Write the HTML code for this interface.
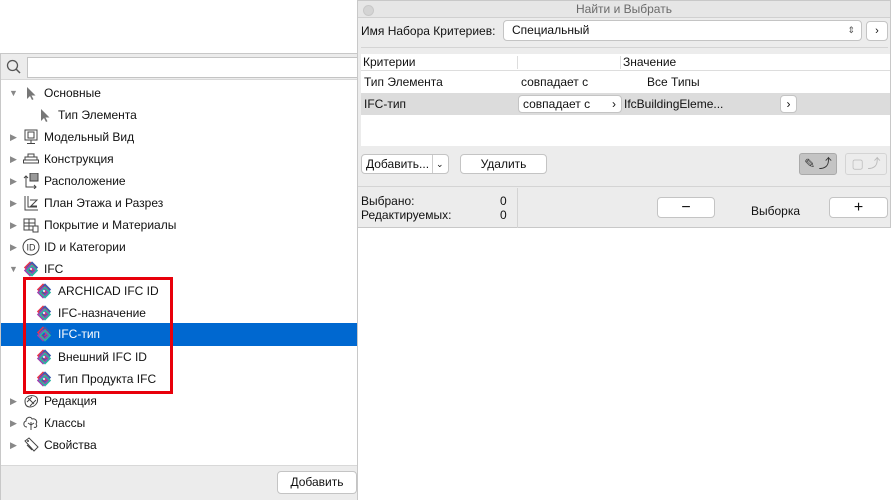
<!DOCTYPE html>
<html><head><meta charset="utf-8"><style>
*{box-sizing:border-box;margin:0;padding:0}
body{width:892px;height:500px;background:#fff;font-family:"Liberation Sans",sans-serif;font-size:12px;color:#111;position:relative;overflow:hidden}
.abs{position:absolute}
#left{left:0;top:53px;width:358px;height:447px;border:1px solid #c8c8c8;background:#fff}
.row{position:absolute;left:0;width:356px;height:22px;line-height:22px;white-space:nowrap}
.tri{position:absolute;top:0;font-size:9px;color:#888}
.ic{position:absolute;top:3px;width:16px;height:16px}
.lbl{position:absolute;top:0}
#right{left:357px;top:0;width:534px;height:228px;background:#ececec;border:1px solid #c8c8c8}
.btn{position:absolute;background:#fff;border:1px solid #c4c4c4;border-radius:4px;text-align:center;font-size:12px}
</style></head><body>
<svg width="0" height="0" style="position:absolute"><defs>
<g id="ifc" fill="none" stroke-width="1.6">
<path d="M7 1.5 L12 6.5 L7 11.5 L2 6.5 Z" stroke="#e8344e"/>
<path d="M9 1.5 L14 6.5 L9 11.5 L4 6.5 Z" stroke="#3b5bb0"/>
<path d="M7 4.5 L12 9.5 L7 14.5 L2 9.5 Z" stroke="#a040b0"/>
<path d="M9 4.5 L14 9.5 L9 14.5 L4 9.5 Z" stroke="#2bb3a0"/>
</g>
<path id="arr" d="M4 2 L4 14 L7 11 L9 15 L10.5 14.3 L8.5 10.5 L12.5 10.5 Z" fill="#777"/>
</defs></svg>

<div id="left" class="abs">
 <div class="abs" style="left:0;top:0;width:356px;height:26px;background:#ececec;border-bottom:1px solid #d8d8d8"></div>
 <svg class="abs" style="left:5px;top:5px" width="16" height="16"><circle cx="6.5" cy="6.5" r="5" fill="none" stroke="#555" stroke-width="1.3"/><line x1="10" y1="10" x2="14" y2="14" stroke="#555" stroke-width="1.5"/></svg>
 <div class="abs" style="left:26px;top:3px;width:331px;height:21px;background:#fff;border:1px solid #c4c4c4"></div>

 <div class="row" style="top:28px"><span class="tri" style="left:8px">▼</span><svg class="ic" style="left:22px" viewBox="0 0 16 16"><use href="#arr"/></svg><span class="lbl" style="left:43px">Основные</span></div>
 <div class="row" style="top:50px"><svg class="ic" style="left:36px" viewBox="0 0 16 16"><use href="#arr"/></svg><span class="lbl" style="left:57px">Тип Элемента</span></div>
 <div class="row" style="top:72px"><span class="tri" style="left:9px">▶</span><svg class="ic" style="left:22px" viewBox="0 0 16 16"><rect x="2" y="1" width="12" height="10" fill="none" stroke="#444"/><rect x="5" y="3" width="6" height="6" fill="none" stroke="#444"/><line x1="8" y1="11" x2="8" y2="14" stroke="#444"/><line x1="4" y1="14.5" x2="12" y2="14.5" stroke="#444"/></svg><span class="lbl" style="left:43px">Модельный Вид</span></div>
 <div class="row" style="top:94px"><span class="tri" style="left:9px">▶</span><svg class="ic" style="left:22px" viewBox="0 0 16 16"><g fill="none" stroke="#444"><rect x="5" y="3" width="6" height="3"/><rect x="2" y="6" width="12" height="3"/><rect x="0.5" y="9" width="15" height="3"/></g></svg><span class="lbl" style="left:43px">Конструкция</span></div>
 <div class="row" style="top:116px"><span class="tri" style="left:9px">▶</span><svg class="ic" style="left:22px" viewBox="0 0 16 16"><rect x="7" y="0" width="8" height="8" fill="#999" stroke="#444"/><path d="M3 3 L3 14 L13 14 M1 5 L3 3 L5 5 M11 12 L13 14 L11 16" fill="none" stroke="#444"/></svg><span class="lbl" style="left:43px">Расположение</span></div>
 <div class="row" style="top:138px"><span class="tri" style="left:9px">▶</span><svg class="ic" style="left:22px" viewBox="0 0 16 16"><path d="M2 1 L2 15 L15 15 M5 1 L5 12 L14 12 M7 5 L14 5 L8 11 L14 11" fill="none" stroke="#444"/></svg><span class="lbl" style="left:43px">План Этажа и Разрез</span></div>
 <div class="row" style="top:160px"><span class="tri" style="left:9px">▶</span><svg class="ic" style="left:22px" viewBox="0 0 16 16"><g fill="none" stroke="#444"><rect x="1" y="2" width="11" height="11"/><line x1="1" y1="6" x2="12" y2="6"/><line x1="1" y1="9" x2="12" y2="9"/><line x1="6" y1="2" x2="6" y2="13"/><rect x="10" y="9" width="5" height="6" fill="#fff"/></g></svg><span class="lbl" style="left:43px">Покрытие и Материалы</span></div>
 <div class="row" style="top:182px"><span class="tri" style="left:9px">▶</span><svg class="ic" style="left:21px;width:18px;height:18px;top:2px" viewBox="0 0 18 18"><circle cx="9" cy="9" r="8" fill="none" stroke="#444"/><text x="9" y="12.5" font-size="9" text-anchor="middle" font-family="Liberation Sans" fill="#333">ID</text></svg><span class="lbl" style="left:43px">ID и Категории</span></div>
 <div class="row" style="top:204px"><span class="tri" style="left:8px">▼</span><svg class="ic" style="left:22px" viewBox="0 0 16 16"><use href="#ifc"/></svg><span class="lbl" style="left:43px">IFC</span></div>
 <div class="row" style="top:226px"><svg class="ic" style="left:35px" viewBox="0 0 16 16"><use href="#ifc"/></svg><span class="lbl" style="left:57px">ARCHICAD IFC ID</span></div>
 <div class="row" style="top:248px"><svg class="ic" style="left:35px" viewBox="0 0 16 16"><use href="#ifc"/></svg><span class="lbl" style="left:57px">IFC-назначение</span></div>
 <div class="row" style="top:269px;height:23px;background:#0068d0;color:#fff"><svg class="ic" style="left:35px" viewBox="0 0 16 16"><use href="#ifc"/></svg><span class="lbl" style="left:57px">IFC-тип</span></div>
 <div class="row" style="top:292px"><svg class="ic" style="left:35px" viewBox="0 0 16 16"><use href="#ifc"/></svg><span class="lbl" style="left:57px">Внешний IFC ID</span></div>
 <div class="row" style="top:314px"><svg class="ic" style="left:35px" viewBox="0 0 16 16"><use href="#ifc"/></svg><span class="lbl" style="left:57px">Тип Продукта IFC</span></div>
 <div class="row" style="top:336px"><span class="tri" style="left:9px">▶</span><svg class="ic" style="left:22px" viewBox="0 0 16 16"><path d="M2 8 C2 2 12 1 14 5 C16 9 12 14 7 14 C3 14 2 11 2 8 Z M5 5 L11 11 M4 9 L9 4 M7 13 L13 7" fill="none" stroke="#444"/></svg><span class="lbl" style="left:43px">Редакция</span></div>
 <div class="row" style="top:358px"><span class="tri" style="left:9px">▶</span><svg class="ic" style="left:22px" viewBox="0 0 16 16"><path d="M8 15 L8 7 M8 10 L5 8 M8 10 L11 8 M4 12 C0 12 0 7 3 6 C3 2 8 1 9 4 C12 3 15 6 13 9 C15 12 12 13 11 12" fill="none" stroke="#444"/></svg><span class="lbl" style="left:43px">Классы</span></div>
 <div class="row" style="top:380px"><span class="tri" style="left:9px">▶</span><svg class="ic" style="left:22px" viewBox="0 0 16 16"><path d="M2 4 L6 1 L15 10 L11 14 Z M4 8 L9 13" fill="none" stroke="#444"/><circle cx="5" cy="4" r="1" fill="#444"/></svg><span class="lbl" style="left:43px">Свойства</span></div>

 <div class="abs" style="left:22px;top:223px;width:150px;height:117px;border:3px solid #e8000b"></div>
 <div class="abs" style="left:0;top:411px;width:356px;height:35px;background:#ececec;border-top:1px solid #d8d8d8"></div>
 <div class="btn" style="left:276px;top:417px;width:80px;height:23px;line-height:21px">Добавить</div>
</div>

<div id="right" class="abs">
 <div class="abs" style="left:0;top:0;width:532px;height:17px;background:#e6e6e6;border-bottom:1px solid #d0d0d0;text-align:center;line-height:17px;color:#6a6a6a">Найти и Выбрать</div>
 <div class="abs" style="left:5px;top:4px;width:11px;height:11px;border-radius:50%;background:#d4d4d4;border:1px solid #c8c8c8"></div>
 <div class="abs" style="left:3px;top:22px;line-height:16px">Имя Набора Критериев:</div>
 <div class="btn" style="left:145px;top:19px;width:359px;height:21px;text-align:left;padding-left:8px;line-height:19px">Специальный<span style="position:absolute;right:6px;top:0;font-size:9px;color:#555">⇕</span></div>
 <div class="btn" style="left:508px;top:20px;width:22px;height:20px;line-height:18px;font-size:11px">›</div>
 <div class="abs" style="left:3px;top:46px;width:527px;height:1px;background:#d4d4d4"></div>
 <div class="abs" style="left:3px;top:53px;width:529px;height:92px;background:#fff"></div>
 <div class="abs" style="left:3px;top:53px;width:529px;height:17px;border-bottom:1px solid #ddd;line-height:17px"><span style="position:absolute;left:2px">Критерии</span><span style="position:absolute;left:156px;top:2px;width:1px;height:13px;background:#ddd"></span><span style="position:absolute;left:259px;top:2px;width:1px;height:13px;background:#ddd"></span><span style="position:absolute;left:262px">Значение</span></div>
 <div class="abs" style="left:3px;top:71px;width:529px;height:21px;line-height:21px"><span style="position:absolute;left:3px">Тип Элемента</span><span style="position:absolute;left:160px">совпадает с</span><span style="position:absolute;left:286px">Все Типы</span></div>
 <div class="abs" style="left:3px;top:92px;width:529px;height:22px;line-height:22px;background:#dcdcdc"><span style="position:absolute;left:3px">IFC-тип</span>
  <div class="btn" style="left:157px;top:2px;width:104px;height:18px;line-height:16px;text-align:left;padding-left:4px">совпадает с<span style="position:absolute;right:5px">›</span></div>
  <span style="position:absolute;left:263px">IfcBuildingEleme...</span>
  <div class="btn" style="left:419px;top:2px;width:17px;height:18px;line-height:16px">›</div></div>
 <div class="btn" style="left:3px;top:153px;width:88px;height:20px;line-height:18px;text-align:left;padding-left:4px">Добавить...<span style="position:absolute;left:70px;top:0;width:1px;height:18px;background:#ccc"></span><span style="position:absolute;left:74px;font-size:9px">⌄</span></div>
 <div class="btn" style="left:102px;top:153px;width:87px;height:20px;line-height:18px">Удалить</div>
 <div class="abs" style="left:441px;top:152px;width:38px;height:22px;background:#c4c4c4;border:1px solid #aaa;border-radius:3px;font-size:13px;line-height:20px;text-align:center;color:#333">✎ ⤴</div>
 <div class="abs" style="left:487px;top:152px;width:42px;height:22px;border:1px solid #d4d4d4;border-radius:3px;font-size:13px;line-height:20px;text-align:center;color:#bbb">▢ ⤴</div>
 <div class="abs" style="left:0;top:185px;width:532px;height:1px;background:#d4d4d4"></div>
 <div class="abs" style="left:159px;top:187px;width:1px;height:40px;background:#d4d4d4"></div>
 <div class="abs" style="left:3px;top:193px;line-height:14px">Выбрано:<br>Редактируемых:</div>
 <div class="abs" style="left:142px;top:193px;line-height:14px">0<br>0</div>
 <div class="btn" style="left:299px;top:196px;width:58px;height:21px;line-height:19px;font-size:16px">−</div>
 <div class="abs" style="left:393px;top:203px">Выборка</div>
 <div class="btn" style="left:471px;top:196px;width:59px;height:21px;line-height:19px;font-size:16px">+</div>
</div>
</body></html>
